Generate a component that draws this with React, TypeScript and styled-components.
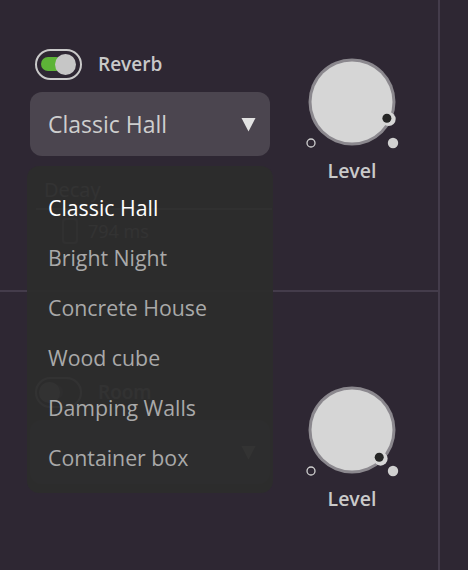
import React from "react";
import styled, { createGlobalStyle } from "styled-components";

const Global = createGlobalStyle`
  html, body { margin: 0; padding: 0; background: #2e2733; overflow: hidden; }
  * { box-sizing: border-box; }
`;

const FONT = `"Open Sans", "Noto Sans", "Liberation Sans", sans-serif`;

const Root = styled.div`
  position: relative;
  width: 468px;
  height: 570px;
  overflow: hidden;
  background: #2e2733;
  display: grid;
  grid-template-columns: 438px 2px 1fr;
  font-family: ${FONT};
`;

const Column = styled.div`
  display: flex;
  flex-direction: column;
`;

const VRule = styled.div`
  background: #443c4b;
`;

const Section = styled.section<{ $top: number; $height?: number; $divider?: boolean }>`
  display: grid;
  grid-template-columns: 240px 1fr;
  align-items: start;
  padding: ${(p) => p.$top}px 0 0 30px;
  height: ${(p) => (p.$height ? `${p.$height}px` : "auto")};
  border-bottom: ${(p) => (p.$divider ? "2px solid #443c4b" : "none")};
  flex: ${(p) => (p.$height ? "none" : "1")};
`;

const Controls = styled.div`
  display: flex;
  flex-direction: column;
  gap: 12px;
`;

const ToggleRow = styled.div`
  display: flex;
  align-items: center;
  gap: 16px;
  height: 32px;
  padding-left: 5px;
`;

const ToggleShell = styled.div`
  width: 47px;
  height: 31px;
  border: 2px solid #c9c9c9;
  border-radius: 16px;
  display: flex;
  align-items: center;
  padding-left: 4px;
`;

const Track = styled.div<{ $on: boolean }>`
  position: relative;
  width: 22px;
  height: 14px;
  border-radius: 7px;
  background: ${(p) => (p.$on ? "#5db437" : "#55505a")};
`;

const Thumb = styled.div<{ $on: boolean }>`
  position: absolute;
  top: 50%;
  left: ${(p) => (p.$on ? "14px" : "-2px")};
  width: 21px;
  height: 21px;
  margin-top: -10.5px;
  border-radius: 50%;
  background: #c6c6c6;
`;

const ToggleLabel = styled.span`
  font-size: 19px;
  font-weight: 600;
  color: #c9c9c9;
`;

const Select = styled.div`
  height: 64px;
  border-radius: 12px;
  background: #4b454f;
  display: flex;
  align-items: center;
  justify-content: space-between;
  padding: 0 14px 0 18px;
  font-size: 23px;
  font-weight: 500;
  color: #cecece;
`;

const DecayBlock = styled.div`
  display: flex;
  flex-direction: column;
  margin-top: 10px;
  color: #d0d0d0;
`;

const DecayLabel = styled.div`
  font-size: 20px;
  font-weight: 500;
  line-height: 24px;
  padding-left: 14px;
`;

const SliderTrack = styled.div`
  height: 2px;
  margin: 6px -2px 0 6px;
  background: #8a8590;
`;

const ValueRow = styled.div`
  display: flex;
  align-items: center;
  gap: 10px;
  padding-left: 32px;
  margin-top: 8px;
  font-size: 18px;
`;

const ValueThumb = styled.div`
  width: 16px;
  height: 26px;
  border: 2px solid #8a8590;
  border-radius: 4px;
`;

const KnobCol = styled.div`
  display: flex;
  flex-direction: column;
  align-items: center;
  padding-right: 4px;
  margin-top: 8px;
`;

const KnobLabel = styled.div`
  margin-top: 4px;
  font-size: 19.5px;
  font-weight: 600;
  line-height: 22px;
  color: #cacaca;
`;

const Menu = styled.div`
  position: absolute;
  left: 27px;
  top: 166px;
  width: 246px;
  height: 327px;
  padding: 16px 0 10px;
  border-radius: 12px;
  background: rgba(45, 45, 45, 0.965);
  display: flex;
  flex-direction: column;
`;

const MenuItem = styled.div<{ $active?: boolean }>`
  height: 50px;
  display: flex;
  align-items: center;
  padding-left: 21px;
  font-size: 21.3px;
  font-weight: 500;
  color: ${(p) => (p.$active ? "#ffffff" : "#a9a9a9")};
`;

const Caret = () => (
  <svg width="15" height="15" viewBox="0 0 15 15">
    <polygon points="0.5,1 14.5,1 7.5,14.5" fill="#e2e2e2" />
  </svg>
);

const Knob = ({ angle }: { angle: number }) => {
  const rad = (angle * Math.PI) / 180;
  const cx = 50, cy = 46;
  const bx = cx + Math.cos(rad) * 40.5;
  const by = cy + Math.sin(rad) * 40.5;
  const dx = cx + Math.cos(rad) * 38.5;
  const dy = cy + Math.sin(rad) * 38.5;
  return (
    <svg width="100" height="100" viewBox="0 0 100 100">
      <circle cx={cx} cy={cy} r={43.5} fill="#8b888e" />
      <circle cx={cx} cy={cy} r={40.5} fill="#d6d6d6" />
      <circle cx={bx} cy={by} r={7} fill="#d6d6d6" />
      <circle cx={dx} cy={dy} r={4.5} fill="#262626" />
      <circle cx={9} cy={87} r={4} fill="none" stroke="#d0d0d0" strokeWidth={1.3} />
      <circle cx={91} cy={87} r={5.2} fill="#d0d0d0" />
    </svg>
  );
};

const presets = ["Classic Hall", "Bright Night", "Concrete House", "Wood cube", "Damping Walls", "Container box"];

export default function App() {
  return (
    <>
      <Global />
      <Root>
        <Column>
          <Section $top={48} $height={292} $divider>
            <Controls>
              <ToggleRow>
                <ToggleShell>
                  <Track $on>
                    <Thumb $on />
                  </Track>
                </ToggleShell>
                <ToggleLabel>Reverb</ToggleLabel>
              </ToggleRow>
              <Select>
                <span>Classic Hall</span>
                <Caret />
              </Select>
              <DecayBlock>
                <DecayLabel>Decay</DecayLabel>
                <SliderTrack />
                <ValueRow>
                  <ValueThumb />
                  <span>794 ms</span>
                </ValueRow>
              </DecayBlock>
            </Controls>
            <KnobCol>
              <Knob angle={25} />
              <KnobLabel>Level</KnobLabel>
            </KnobCol>
          </Section>
          <Section $top={84}>
            <Controls>
              <ToggleRow>
                <ToggleShell>
                  <Track $on={false}>
                    <Thumb $on={false} />
                  </Track>
                </ToggleShell>
                <ToggleLabel>Room</ToggleLabel>
              </ToggleRow>
              <Select>
                <span />
                <Caret />
              </Select>
            </Controls>
            <KnobCol>
              <Knob angle={45} />
              <KnobLabel>Level</KnobLabel>
            </KnobCol>
          </Section>
        </Column>
        <VRule />
        <div />
        <Menu>
          {presets.map((p, i) => (
            <MenuItem key={p} $active={i === 0}>
              {p}
            </MenuItem>
          ))}
        </Menu>
      </Root>
    </>
  );
}
